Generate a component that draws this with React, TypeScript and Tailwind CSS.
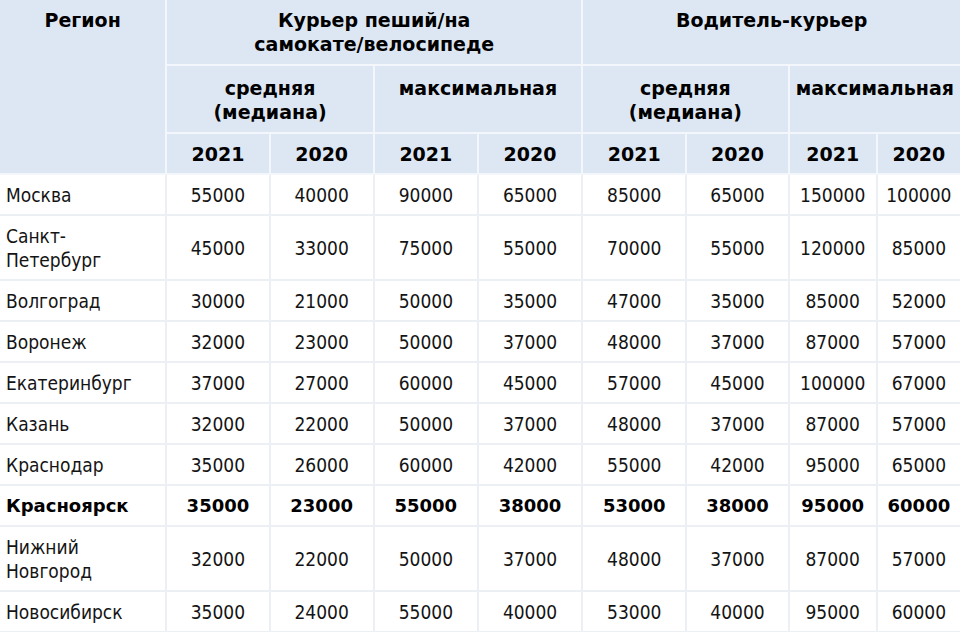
import React from 'react';

interface Row {
  region: string;
  values: number[];
  bold?: boolean;
}

const rows: Row[] = [
  { region: 'Москва', values: [55000, 40000, 90000, 65000, 85000, 65000, 150000, 100000] },
  { region: 'Санкт-Петербург', values: [45000, 33000, 75000, 55000, 70000, 55000, 120000, 85000] },
  { region: 'Волгоград', values: [30000, 21000, 50000, 35000, 47000, 35000, 85000, 52000] },
  { region: 'Воронеж', values: [32000, 23000, 50000, 37000, 48000, 37000, 87000, 57000] },
  { region: 'Екатеринбург', values: [37000, 27000, 60000, 45000, 57000, 45000, 100000, 67000] },
  { region: 'Казань', values: [32000, 22000, 50000, 37000, 48000, 37000, 87000, 57000] },
  { region: 'Краснодар', values: [35000, 26000, 60000, 42000, 55000, 42000, 95000, 65000] },
  { region: 'Красноярск', values: [35000, 23000, 55000, 38000, 53000, 38000, 95000, 60000], bold: true },
  { region: 'Нижний Новгород', values: [32000, 22000, 50000, 37000, 48000, 37000, 87000, 57000] },
  { region: 'Новосибирск', values: [35000, 24000, 55000, 40000, 53000, 40000, 95000, 60000] },
];

const widths = ['w-[167px]', 'w-[103px]', 'w-[104px]', 'w-[104px]', 'w-[104px]', 'w-[104px]', 'w-[102px]', 'w-[88px]', 'w-[84px]'];

// bold text uses the normal-width face, regular text the condensed one
const boldFont = "[font-family:'DejaVu_Sans',sans-serif] [font-stretch:normal] font-bold";
const th = `border-2 border-[#f3f6fb] bg-[#dde7f3] text-black text-center px-1 text-[19px] ${boldFont}`;
const td = 'border-2 border-[#eceff3] text-center align-middle pt-[8px] pb-[7px] px-1';

export default function App() {
  return (
    <div className="w-[960px] h-[632px] overflow-hidden bg-white text-[19px] leading-[24px] text-[#141414] [font-family:'DejaVu_Sans_Condensed','DejaVu_Sans',sans-serif] [font-stretch:condensed]">
      <table className="table-fixed border-collapse w-[964px] -ml-[2px] -mt-[2px]">
        <colgroup>
          {widths.map((w, i) => (
            <col key={i} className={w} />
          ))}
        </colgroup>
        <thead>
          <tr className="h-[66px]">
            <th rowSpan={3} className={`${th} align-top pt-[8px]`}>Регион</th>
            <th colSpan={4} className={`${th} align-top pt-[8px]`}>
              Курьер пеший/на
              <br />
              самокате/велосипеде
            </th>
            <th colSpan={4} className={`${th} align-top pt-[8px]`}>Водитель-курьер</th>
          </tr>
          <tr className="h-[68px]">
            <th colSpan={2} className={`${th} align-top pt-[10px]`}>
              средняя
              <br />
              (медиана)
            </th>
            <th colSpan={2} className={`${th} align-top pt-[10px]`}>максимальная</th>
            <th colSpan={2} className={`${th} align-top pt-[10px]`}>
              средняя
              <br />
              (медиана)
            </th>
            <th colSpan={2} className={`${th} align-top pt-[10px]`}>максимальная</th>
          </tr>
          <tr className="h-[41px]">
            {['2021', '2020', '2021', '2020', '2021', '2020', '2021', '2020'].map((y, i) => (
              <th key={i} className={`${th} align-middle`}>{y}</th>
            ))}
          </tr>
        </thead>
        <tbody>
          {rows.map((r) => (
            <tr key={r.region} className={r.bold ? `${boldFont} text-[18px] text-black` : ''}>
              <td className={`${td} text-left pl-[6px] pr-[40px]`}>{r.region}</td>
              {r.values.map((v, i) => (
                <td key={i} className={td}>{v}</td>
              ))}
            </tr>
          ))}
        </tbody>
      </table>
    </div>
  );
}
